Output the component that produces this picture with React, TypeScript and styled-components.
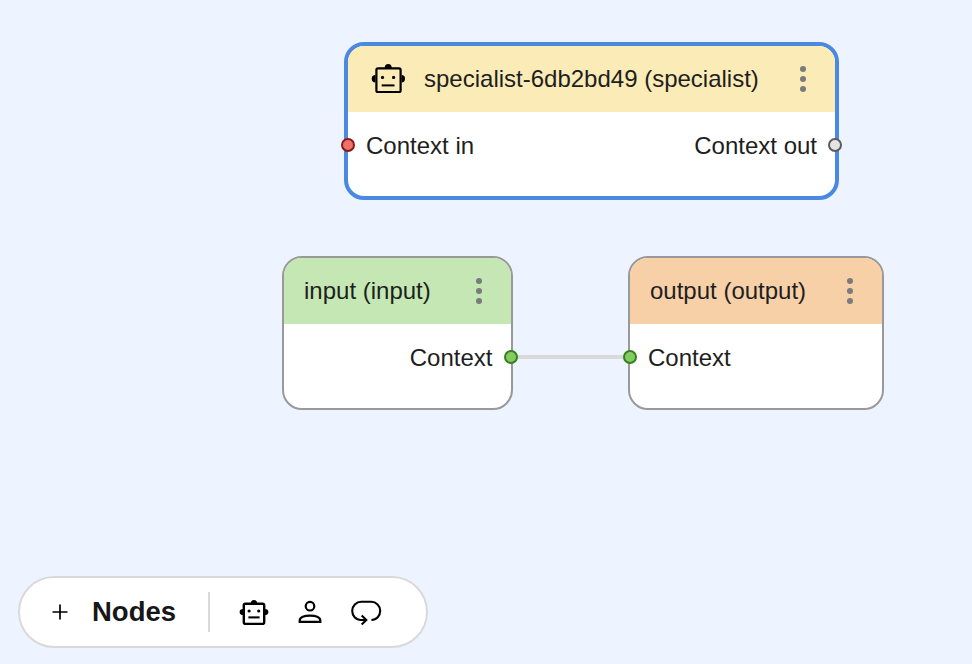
import React from "react";
import styled, { createGlobalStyle } from "styled-components";

const GlobalStyle = createGlobalStyle`
  * { box-sizing: border-box; }
  body { margin: 0; background: #eef4ff; }
  button { font: inherit; color: inherit; background: none; border: 0; padding: 0; }
`;

const Canvas = styled.main`
  position: relative;
  width: 100%;
  height: 100vh;
  overflow: hidden;
  background: #eef4ff;
  color: #1e1e1e;
  font-family: "Liberation Sans", Arial, sans-serif;
`;

const Edge = styled.div`
  position: absolute;
  left: 511px;
  top: 355px;
  width: 119px;
  height: 4px;
  background: #d9d9d9;
`;

const NodeCard = styled.article<{ $x: number; $y: number; $w: number; $h: number; $selected?: boolean }>`
  position: absolute;
  left: ${(p) => p.$x}px;
  top: ${(p) => p.$y}px;
  width: ${(p) => p.$w}px;
  height: ${(p) => p.$h}px;
  display: flex;
  flex-direction: column;
  border: ${(p) => (p.$selected ? "4px solid #4a89e2" : "2px solid #999")};
  border-radius: 20px;
  background: #fff;
  font-size: 24px;
  line-height: 28px;
`;

const NodeHeader = styled.header<{ $tint: string; $selected?: boolean }>`
  display: flex;
  align-items: center;
  height: 66.5px;
  flex: none;
  padding: 0 29px 0 ${(p) => (p.$selected ? 22.5 : 20)}px;
  border-radius: ${(p) => (p.$selected ? "16px 16px" : "18px 18px")} 0 0;
  background: ${(p) => p.$tint};
`;

const Title = styled.span<{ $gap?: number }>`
  flex: 1;
  margin-left: ${(p) => p.$gap ?? 0}px;
  padding-top: 1px;
  white-space: nowrap;
`;

const MenuButton = styled.button`
  display: flex;
  flex-direction: column;
  gap: 4px;
`;

const Dot = styled.i`
  width: 6px;
  height: 6px;
  border-radius: 50%;
  background: #7b7b7b;
`;

const Ports = styled.div`
  position: relative;
  display: flex;
  justify-content: space-between;
  padding: 20px 18px 0;
`;

const PortLabel = styled.span<{ $end?: boolean }>`
  margin-left: ${(p) => (p.$end ? "auto" : "0")};
  white-space: nowrap;
`;

const Handle = styled.i<{ $side: "left" | "right"; $offset: number; $fill: string; $line: string }>`
  position: absolute;
  top: 26px;
  ${(p) => p.$side}: ${(p) => p.$offset}px;
  width: 14px;
  height: 14px;
  border: 2px solid ${(p) => p.$line};
  border-radius: 50%;
  background: ${(p) => p.$fill};
`;

const Toolbar = styled.nav`
  position: absolute;
  left: 18px;
  top: 576px;
  width: 410px;
  height: 72px;
  display: flex;
  align-items: center;
  padding-left: 32px;
  border: 2px solid #d9d9d9;
  border-radius: 36px;
  background: #fff;
`;

const AddButton = styled.button`
  display: flex;
  align-items: center;
  gap: 24px;
  width: 156px;
  font-size: 27.5px;
  line-height: 32px;
  font-weight: 700;
  color: #171717;
`;

const Divider = styled.div`
  width: 2px;
  height: 40px;
  background: #d9d9d9;
`;

const Tools = styled.div`
  display: flex;
  gap: 16px;
  margin-left: 24px;
`;

const ToolButton = styled.button`
  display: flex;
  align-items: center;
  justify-content: center;
  width: 40px;
  height: 36px;
`;

const Drawing = styled.svg`
  display: block;
  flex: none;
  fill: none;
  stroke: #000;
`;

const SpecialistIcon = () => (
  <Drawing width="34" height="34" viewBox="371 62 34 34" strokeWidth="2.2">
    <rect x="376.4" y="68.4" width="24.2" height="23.6" rx="1.6" />
    <path fill="#000" stroke="none" d="M384.700 68a3.500 4 0 0 1 7 0zM375.500 75v7.400a3.800 3.700 0 0 1 0-7.400zM401.500 75v7.400a3.500 3.700 0 0 0 0-7.400z" />
    <circle cx="382.5" cy="77.4" r="1.6" fill="#000" stroke="none" />
    <circle cx="393.6" cy="77.4" r="1.6" fill="#000" stroke="none" />
    <path d="M381.7 85.4h12.8" strokeWidth="2" />
  </Drawing>
);

const RobotIcon = () => (
  <Drawing width="40" height="36" viewBox="234 594 40 36" strokeWidth="2.4">
    <rect x="243.8" y="603.7" width="20.4" height="20.2" rx="1.6" />
    <path fill="#000" stroke="none" d="M250.8 603.500a3.200 3.500 0 0 1 6.400 0zM243.200 608.900v6.200a3.600 3.100 0 0 1 0-6.200zM264.800 608.900v6.200a3.600 3.100 0 0 0 0-6.200z" />
    <circle cx="249.1" cy="611" r="1.6" fill="#000" stroke="none" />
    <circle cx="258.7" cy="611" r="1.6" fill="#000" stroke="none" />
    <path d="M248.4 617.4h11.200" strokeWidth="2.1" />
  </Drawing>
);

const PersonIcon = () => (
  <Drawing width="40" height="36" viewBox="290 594 40 36" strokeWidth="2.2">
    <circle cx="310" cy="606.2" r="4.300" />
    <path d="M299.700 621.800v-1.300c0-3.200 4.800-4.900 10.300-4.900s10.300 1.700 10.300 4.900v1.300z" />
  </Drawing>
);

const LoopIcon = () => (
  <Drawing width="40" height="36" viewBox="346 594 40 36" strokeWidth="2.1">
    <path d="M371.4 620C376.6 620 380.2 615.8 380.2 610.8C380.2 605.8 376.2 601.8 371.2 601.8H361.2C356.2 601.8 352.200 605.800 352.200 610.800C352.200 615.900 355.800 620 361 620H366" />
    <path d="M361.7 615.500L366.300 620L361.700 624.500" />
  </Drawing>
);

const MoreMenu = () => (
  <MenuButton aria-label="Node menu"><Dot /><Dot /><Dot /></MenuButton>
);

export default function App() {
  return (
    <>
      <GlobalStyle />
      <Canvas>
        <Edge />
        <NodeCard $x={344} $y={41.5} $w={495} $h={158.5} $selected>
          <NodeHeader $tint="#fbebb7" $selected>
            <SpecialistIcon />
            <Title $gap={19.5}>specialist-6db2bd49 (specialist)</Title>
            <MoreMenu />
          </NodeHeader>
          <Ports>
            <Handle $side="left" $offset={-7} $fill="#f0716a" $line="#8c1b16" />
            <PortLabel>Context in</PortLabel>
            <PortLabel $end>Context out</PortLabel>
            <Handle $side="right" $offset={-7} $fill="#e4e4e4" $line="#5c5c5c" />
          </Ports>
        </NodeCard>
        <NodeCard $x={282} $y={255.5} $w={230.5} $h={154.5}>
          <NodeHeader $tint="#c4e7b4">
            <Title>input (input)</Title>
            <MoreMenu />
          </NodeHeader>
          <Ports>
            <PortLabel $end>Context</PortLabel>
            <Handle $side="right" $offset={-7} $fill="#84cb62" $line="#35801f" />
          </Ports>
        </NodeCard>
        <NodeCard $x={628} $y={255.5} $w={256} $h={154.5}>
          <NodeHeader $tint="#f7d0a8">
            <Title>output (output)</Title>
            <MoreMenu />
          </NodeHeader>
          <Ports>
            <Handle $side="left" $offset={-7} $fill="#84cb62" $line="#35801f" />
            <PortLabel>Context</PortLabel>
          </Ports>
        </NodeCard>
        <Toolbar>
          <AddButton>
            <Drawing width="16" height="16" viewBox="0 0 16 16" strokeWidth="1.7">
              <path d="M8 .5v15M.5 8h15" />
            </Drawing>
            Nodes
          </AddButton>
          <Divider />
          <Tools>
            <ToolButton aria-label="Specialist"><RobotIcon /></ToolButton>
            <ToolButton aria-label="Person"><PersonIcon /></ToolButton>
            <ToolButton aria-label="Loop"><LoopIcon /></ToolButton>
          </Tools>
        </Toolbar>
      </Canvas>
    </>
  );
}
